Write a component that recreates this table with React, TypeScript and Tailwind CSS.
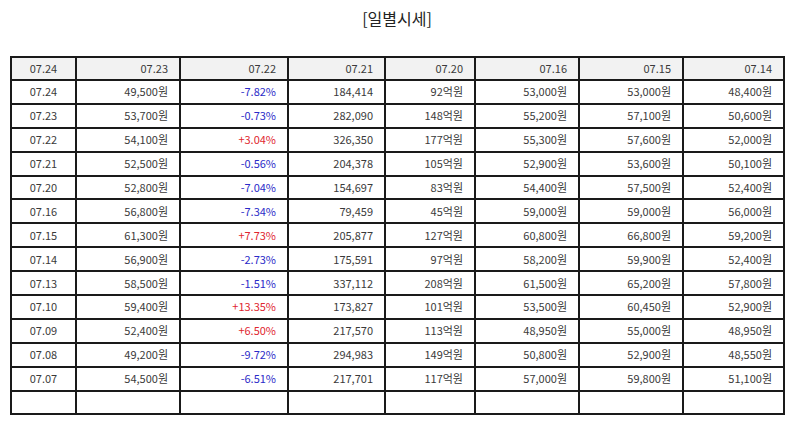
const HEAD = ["07.24", "07.23", "07.22", "07.21", "07.20", "07.16", "07.15", "07.14"];

const ROWS: string[][] = [
  ["07.24", "49,500원", "-7.82%", "184,414", "92억원", "53,000원", "53,000원", "48,400원"],
  ["07.23", "53,700원", "-0.73%", "282,090", "148억원", "55,200원", "57,100원", "50,600원"],
  ["07.22", "54,100원", "+3.04%", "326,350", "177억원", "55,300원", "57,600원", "52,000원"],
  ["07.21", "52,500원", "-0.56%", "204,378", "105억원", "52,900원", "53,600원", "50,100원"],
  ["07.20", "52,800원", "-7.04%", "154,697", "83억원", "54,400원", "57,500원", "52,400원"],
  ["07.16", "56,800원", "-7.34%", "79,459", "45억원", "59,000원", "59,000원", "56,000원"],
  ["07.15", "61,300원", "+7.73%", "205,877", "127억원", "60,800원", "66,800원", "59,200원"],
  ["07.14", "56,900원", "-2.73%", "175,591", "97억원", "58,200원", "59,900원", "52,400원"],
  ["07.13", "58,500원", "-1.51%", "337,112", "208억원", "61,500원", "65,200원", "57,800원"],
  ["07.10", "59,400원", "+13.35%", "173,827", "101억원", "53,500원", "60,450원", "52,900원"],
  ["07.09", "52,400원", "+6.50%", "217,570", "113억원", "48,950원", "55,000원", "48,950원"],
  ["07.08", "49,200원", "-9.72%", "294,983", "149억원", "50,800원", "52,900원", "48,550원"],
  ["07.07", "54,500원", "-6.51%", "217,701", "117억원", "57,000원", "59,800원", "51,100원"],
  ["", "", "", "", "", "", "", ""],
];

const WIDTHS = ["w-[65px]", "w-[104px]", "w-[108px]", "w-[97px]", "w-[90px]", "w-[104px]", "w-[104px]", "w-[101px]"];

function cellColor(i: number, v: string) {
  if (i !== 2) return "text-[#3a3a3a]";
  return v.startsWith("+") ? "text-[#e0262f]" : "text-[#2b2bc8]";
}

export default function App() {
  return (
    <div className="h-[425px] w-[794px] bg-white font-['Noto_Sans_CJK_KR','Noto_Sans',sans-serif]">
      <h1 className="pt-[7px] text-center text-[16px] leading-[22px] text-[#222]">[일별시세]</h1>
      <table className="ml-[10px] mt-[27px] w-[775px] table-fixed border-collapse text-[11px] leading-none">
        <colgroup>
          {WIDTHS.map((w, i) => (
            <col key={i} className={w} />
          ))}
        </colgroup>
        <thead>
          <tr className="h-[23px] bg-[#f2f2f2]">
            {HEAD.map((h, i) => (
              <th
                key={i}
                className={`border-2 border-[#1a1a1a] font-normal text-[#3a3a3a] ${
                  i === 0 ? "text-center" : "pr-[11px] text-right"
                }`}
              >
                {h}
              </th>
            ))}
          </tr>
        </thead>
        <tbody>
          {ROWS.map((r, ri) => (
            <tr key={ri} className="h-[23.9px]">
              {r.map((v, i) => (
                <td
                  key={i}
                  className={`border-2 border-[#1a1a1a] ${cellColor(i, v)} ${
                    i === 0 ? "text-center" : "pr-[11px] text-right"
                  }`}
                >
                  {v}
                </td>
              ))}
            </tr>
          ))}
        </tbody>
      </table>
    </div>
  );
}
